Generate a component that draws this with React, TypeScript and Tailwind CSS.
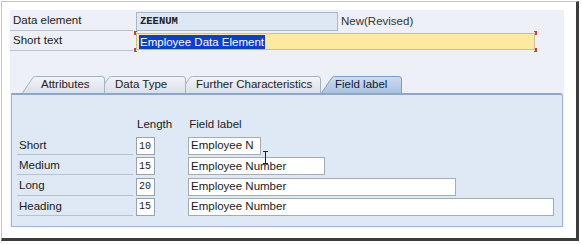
const font = "font-['Liberation_Sans',Arial,sans-serif]";
const mono = "font-['Liberation_Mono','Courier_New',monospace]";

// earlier tabs sit on top of the next one's slant; the active tab on top of all
const tabs = [
  { label: "Attributes", width: 83, pad: "pl-[19px]", z: "z-40", shift: "" },
  { label: "Data Type", width: 88, pad: "pl-[17px]", z: "z-30", shift: "-ml-[7px]" },
  { label: "Further Characteristics", width: 142, pad: "pl-[17px]", z: "z-20", shift: "-ml-[7px]" },
  { label: "Field label", width: 81, pad: "pl-[14px]", z: "z-50", shift: "" },
];

const rows = [
  { label: "Short", len: "10", text: "Employee N", width: 73 },
  { label: "Medium", len: "15", text: "Employee Number", width: 137 },
  { label: "Long", len: "20", text: "Employee Number", width: 268 },
  { label: "Heading", len: "15", text: "Employee Number", width: 366 },
];

type TabProps = { label: string; width: number; pad: string; z: string; shift: string; active?: boolean };

function Tab({ label, width, pad, z, shift, active }: TabProps) {
  const fill = active ? "url(#tabActive)" : "url(#tabIdle)";
  const stroke = active ? "#7f9dc4" : "#a3b2c4";
  return (
    <div className={`relative flex h-[17px] shrink-0 items-center ${z} ${shift}`} style={{ width }}>
      <svg className="absolute inset-0" width={width} height={17} viewBox={`0 0 ${width} 17`}>
        <path
          d={`M0.5 17 L11 1.5 Q12 0.5 13.5 0.5 L${width - 3} 0.5 Q${width - 0.5} 0.5 ${width - 0.5} 3 L${width - 0.5} 17`}
          fill={fill}
          stroke={stroke}
        />
      </svg>
      <span className={`relative whitespace-nowrap text-[11.5px] ${pad} ${active ? "text-[#10203a]" : "text-[#222]"}`}>
        {label}
      </span>
    </div>
  );
}

function Bracket({ className }: { className: string }) {
  return <span className={`absolute h-[4px] w-[3px] border-[#d23a3a] ${className}`} />;
}

export default function App() {
  return (
    <div className={`h-[244px] w-[581px] bg-white pl-px pt-px ${font}`}>
      <svg width="0" height="0" className="absolute">
        <defs>
          <linearGradient id="tabIdle" x1="0" y1="0" x2="0" y2="1">
            <stop offset="0" stopColor="#f3f5f8" />
            <stop offset="1" stopColor="#d9e0e9" />
          </linearGradient>
          <linearGradient id="tabActive" x1="0" y1="0" x2="0" y2="1">
            <stop offset="0" stopColor="#cddcee" />
            <stop offset="1" stopColor="#a9c2e0" />
          </linearGradient>
        </defs>
      </svg>
      <div className="h-[240px] w-[578px] border-b-[3px] border-l border-r-[3px] border-t border-b-[#3c3c3c] border-l-[#c4c4c4] border-r-[#3c3c3c] border-t-[#c4c4c4] pl-[8px] pt-[8px]">
        <div className="relative h-[217px] w-[554px] bg-[#edf1f7] text-[11.5px] text-[#1b1b1b]">
          {/* header fields */}
          <div className="flex h-[21px] items-end">
            <div className="flex h-[19px] w-[123px] items-center border-b border-[#b9c3cf] pl-[3px]">Data element</div>
            <div className={`ml-[3px] flex h-[19px] w-[202px] items-center border border-[#a9b7c8] bg-[#dde8f4] pl-[3px] text-[10.5px] font-bold text-[#222] ${mono}`}>
              ZEENUM
            </div>
            <div className="ml-[3px] flex h-[19px] items-center text-[#333]">New(Revised)</div>
          </div>
          <div className="mt-[1px] flex h-[19px] items-end">
            <div className="flex h-[19px] w-[123px] items-center border-b border-[#b9c3cf] pl-[3px]">Short text</div>
            <div className="relative ml-[3px] mb-[1px] h-[17px] w-[399px]">
              <div className="flex h-full w-full items-center border border-[#c9bf9a] bg-[#fee9a0] pl-[2px]">
                <span className="bg-[#0b3fd2] px-[1px] leading-[14px] text-white">Employee Data Element</span>
              </div>
              <Bracket className="-left-[2px] -top-[2px] border-l-2 border-t" />
              <Bracket className="-left-[2px] -bottom-[2px] border-b border-l-2" />
              <Bracket className="-right-[2px] -top-[2px] border-r-2 border-t" />
              <Bracket className="-right-[2px] -bottom-[2px] border-b border-r-2" />
            </div>
          </div>

          {/* tabs */}
          <div className="mt-[25px] flex pl-[12px]">
            {tabs.map((t) => (
              <Tab key={t.label} {...t} active={t.label === "Field label"} />
            ))}
          </div>

          {/* panel */}
          <div className="ml-[1px] h-[134px] w-[552px] rounded-tr-[3px] border border-t-2 border-[#9fb6d3] border-t-[#8ea7c8] bg-[#dfe9f5] pl-[5px] pt-[23px]">
            <div className="flex h-[14px] items-center">
              <span className="pl-[120px]">Length</span>
              <span className="pl-[17px]">Field label</span>
            </div>
            <div className="mt-[5px] flex flex-col gap-[2.3px]">
              {rows.map((r) => (
                <div key={r.label} className="flex h-[18px] items-stretch">
                  <div className="flex w-[116px] items-center border-b border-[#b6c2d1] pl-[2px]">{r.label}</div>
                  <div className={`ml-[3px] flex w-[19px] items-center border border-[#9aa3ad] bg-white pl-[2px] text-[10px] ${mono}`}>
                    {r.len}
                  </div>
                  <div
                    className="ml-[33px] flex items-center border border-[#a3abb5] bg-white pl-[2px]"
                    style={{ width: r.width }}
                  >
                    {r.text}
                  </div>
                </div>
              ))}
            </div>
          </div>

          {/* mouse cursor */}
          <svg className="absolute left-[252px] top-[141px]" width="7" height="13" viewBox="0 0 7 13">
            <path d="M1 0.5 H6 M3.5 0.5 V12.5 M1 12.5 H6" stroke="#222" strokeWidth="1" fill="none" />
          </svg>
        </div>
      </div>
    </div>
  );
}
